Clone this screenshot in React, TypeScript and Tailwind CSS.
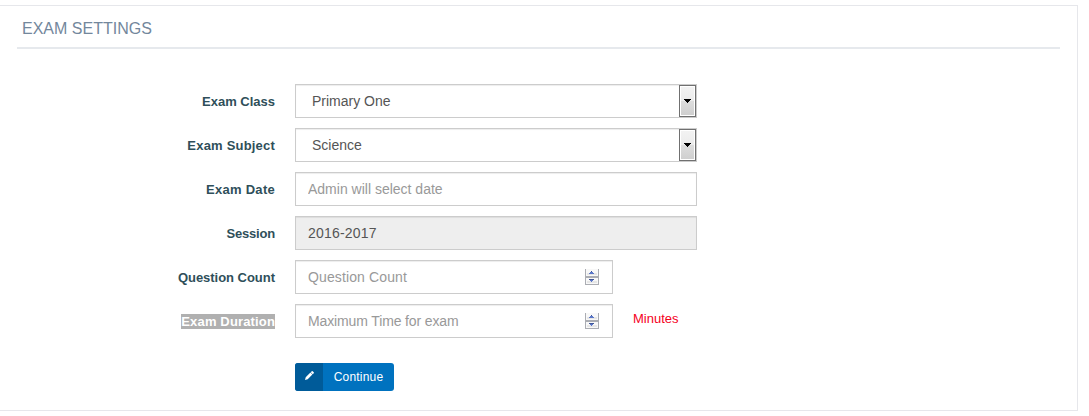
import React from "react";

const control =
  "block h-[34px] rounded-none border border-[#ccc] px-3 text-[14px] leading-5 text-[#555] outline-none placeholder:text-[#999] placeholder:opacity-100 shadow-[inset_0_1px_1px_rgba(0,0,0,0.075)]";

type RowProps = { label: string; spacing?: string; selected?: boolean; children: React.ReactNode };

function Row({ label, spacing = "", selected, children }: RowProps) {
  return (
    <div className="flex h-[34px] items-center">
      <label className={`w-[275px] text-right text-[13px] leading-[15px] font-bold text-[#2f4f5a] ${spacing}`}>
        <span className={selected ? "inline-block bg-[#b0b0b0] text-white" : ""}>{label}</span>
      </label>
      <div className="ml-5 flex items-center">{children}</div>
    </div>
  );
}

function Select({ value }: { value: string }) {
  return (
    <div className="relative">
      <select className={`${control} w-[402px] appearance-none bg-white pl-4`} defaultValue={value}>
        <option>{value}</option>
      </select>
      <span className="pointer-events-none absolute top-px right-px flex h-8 w-[17px] items-center justify-center border border-[#707070] bg-white p-px">
        <span className="flex h-full w-full items-center justify-center bg-[linear-gradient(#f2f2f2_0%,#ebebeb_50%,#dddddd_50%,#cfcfcf_100%)]">
          <svg width="7" height="4" viewBox="0 0 7 4" shapeRendering="crispEdges">
            <path d="M0 0h7v1H0zM1 1h5v1H1zM2 2h3v1H2zM3 3h1v1H3z" fill="#000" />
          </svg>
        </span>
      </span>
    </div>
  );
}

function NumberField({ placeholder, spacing }: { placeholder: string; spacing: string }) {
  return (
    <div className="relative">
      <input type="text" inputMode="numeric" placeholder={placeholder} className={`${control} w-[318px] bg-white ${spacing}`} />
      <svg className="absolute top-[9px] right-[14px]" width="14" height="16" viewBox="0 0 14 16" shapeRendering="crispEdges">
        <path d="M0 0h14v16H0z" fill="#abadb3" />
        <path d="M1 0h12v7H1zM1 9h12v6H1z" fill="#f8f8f8" />
        <path d="M2 4h10v2H2zM2 12h10v2H2z" fill="#e6e6e6" />
        <path d="M6 2h1v1H6zM5 3h3v1H5zM4 4h5v1H4zM4 10h5v1H4zM5 11h3v1H5zM6 12h1v1H6z" fill="#5a76c8" />
        <path d="M6 2h1v1H6zM4 10h5v1H4z" fill="#3f5597" />
      </svg>
    </div>
  );
}

export default function App() {
  return (
    <div className="h-[416px] w-full bg-white pt-[5px] font-['Liberation_Sans',Arial,sans-serif]">
      <section className="h-[406px] w-[1078px] border-t border-r border-b border-[#e6e7eb]">
        <h2 className="ml-[17px] h-[43px] w-[1043px] border-b-2 border-[#e6e9ed] pt-[11px] pl-[5px] text-[16px] leading-6 text-[#73879c]">
          EXAM SETTINGS
        </h2>
        <form className="flex flex-col gap-2.5 pt-[35px]" onSubmit={(e) => e.preventDefault()}>
          <Row label="Exam Class"><Select value="Primary One" /></Row>
          <Row label="Exam Subject" spacing="tracking-[0.2px]"><Select value="Science" /></Row>
          <Row label="Exam Date" spacing="tracking-[0.28px]">
            <input placeholder="Admin will select date" className={`${control} w-[402px] bg-white`} />
          </Row>
          <Row label="Session" spacing="tracking-[-0.2px]">
            <input readOnly value="2016-2017" className={`${control} w-[402px] bg-[#eee] tracking-[0.2px]`} />
          </Row>
          <Row label="Question Count" spacing="tracking-[-0.03px]">
            <NumberField placeholder="Question Count" spacing="tracking-[0.12px]" />
          </Row>
          <Row label="Exam Duration" spacing="tracking-[0.15px]" selected>
            <NumberField placeholder="Maximum Time for exam" spacing="tracking-[-0.13px]" />
            <span className="mb-[5px] ml-5 text-[13px] leading-5 text-[#f5001d]">Minutes</span>
          </Row>
          <button className="mt-[15px] ml-[295px] flex h-7 w-[99px] overflow-hidden rounded-[3px] bg-[#0072bf] text-[12px] leading-7 tracking-[0.2px] text-white">
            <span className="flex h-7 w-7 items-center justify-center bg-[#005b99]">
              <svg className="-mt-1" width="9" height="9" viewBox="0 0 10 10" fill="#fff">
                <path d="M0 10l.8-3L6 1.8 8.2 4 3 9.2zM6.4 1.4 7.5.3q.5-.5 1 0l1.2 1.2q.5.5 0 1L8.6 3.6z" />
              </svg>
            </span>
            <span className="flex-1 text-center">Continue</span>
          </button>
        </form>
      </section>
    </div>
  );
}
